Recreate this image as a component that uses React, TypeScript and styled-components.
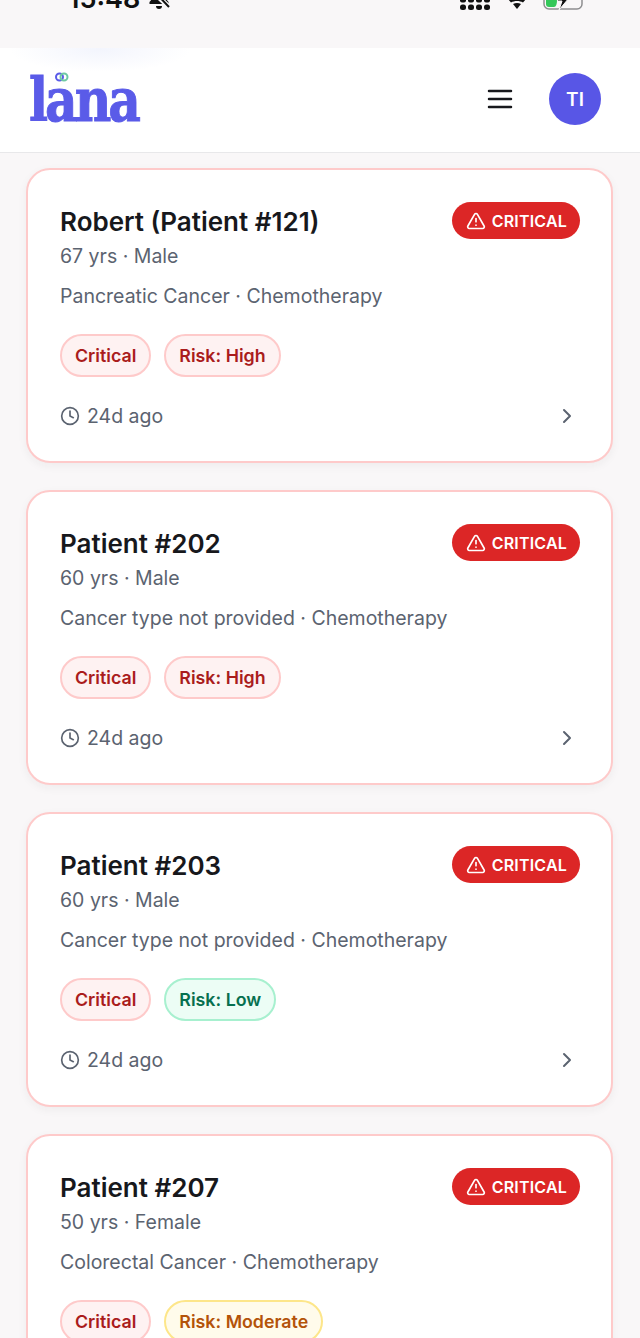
import styled, { createGlobalStyle } from "styled-components";
import { ChevronRight, Clock, TriangleAlert } from "lucide-react";

const GlobalStyle = createGlobalStyle`
  html, body {
    margin: 0;
    padding: 0;
    background: #f9f7f8;
    font-family: Inter, "Liberation Sans", sans-serif;
  }
`;

const Page = styled.div`
  width: 640px;
  height: 1338px;
  overflow: hidden;
  background: #f9f7f8;
`;

const StatusBar = styled.div`
  height: 48px;
  box-sizing: border-box;
  padding: 0 55px 38px 68px;
  display: flex;
  align-items: flex-end;
  justify-content: space-between;
  overflow: hidden;
`;

const StatusLeft = styled.div`
  display: flex;
  align-items: flex-end;
  gap: 8px;
`;

const Time = styled.span`
  font-size: 27px;
  line-height: 27px;
  font-weight: 600;
  margin-bottom: -2px;
  color: #111;
`;

const StatusRight = styled.div`
  display: flex;
  align-items: flex-end;
  gap: 16px;
`;

const Header = styled.header`
  height: 105px;
  box-sizing: border-box;
  padding: 0 39px 2px 29px;
  display: flex;
  align-items: center;
  justify-content: space-between;
  background: radial-gradient(90px 22px at 100px 2px, #f3f5fd, transparent), #fff;
  border-bottom: 1px solid #e8e8ea;
`;

const Logo = styled.div`
  position: relative;
  height: 60px;
  margin-top: 1px;
  display: flex;
  align-items: flex-end;
`;

const LogoText = styled.span`
  font-family: "DejaVu Serif", serif;
  font-weight: 700;
  font-size: 60px;
  line-height: 60px;
  letter-spacing: -3.6px;
  color: #5a5be8;
  -webkit-text-stroke: 1px #5a5be8;
  display: inline-block;
  transform: scaleX(0.84);
  transform-origin: left bottom;
  width: 111px;
`;

const LogoDots = styled.svg`
  position: absolute;
  left: 26px;
  top: 2px;
`;

const HeaderActions = styled.div`
  display: flex;
  align-items: center;
  gap: 36px;
`;

const Burger = styled.svg`
  display: block;
`;

const Avatar = styled.div`
  width: 52px;
  height: 52px;
  border-radius: 50%;
  background: #5856e6;
  color: #fff;
  font-size: 19px;
  font-weight: 600;
  display: flex;
  align-items: center;
  justify-content: center;
`;

const List = styled.main`
  padding: 15px 27px 0 26px;
  display: flex;
  flex-direction: column;
  gap: 27px;
`;

const Card = styled.article`
  box-sizing: border-box;
  height: 295px;
  flex-shrink: 0;
  padding: 32px 31px 0 32px;
  background: #fff;
  border: 2px solid #fecaca;
  border-radius: 24px;
  box-shadow: 0 3px 10px rgba(40, 30, 40, 0.05);
`;

const TopRow = styled.div`
  display: flex;
  justify-content: space-between;
  align-items: flex-start;
`;

const Name = styled.h2`
  margin: 2px 0 0;
  font-size: 26px;
  line-height: 36px;
  font-weight: 600;
  color: #17181c;
`;

const CriticalBadge = styled.div`
  height: 37px;
  box-sizing: border-box;
  padding: 0 13px 0 14px;
  display: flex;
  align-items: center;
  gap: 6px;
  border-radius: 19px;
  background: #dc2626;
  color: #fff;
  font-size: 16px;
  font-weight: 600;
  letter-spacing: 0.2px;
`;

const Demographics = styled.div`
  margin-top: 2px;
  font-size: 19.5px;
  line-height: 28px;
  color: #5b6370;
`;

const Diagnosis = styled.div`
  margin-top: 12px;
  font-size: 19.5px;
  line-height: 28px;
  color: #5b6370;
`;

const Pills = styled.div`
  margin-top: 24px;
  display: flex;
  gap: 13px;
`;

const tones = {
  red: { bg: "#fef2f2", border: "#fecaca", color: "#aa1c1c" },
  green: { bg: "#ecfdf5", border: "#a7f0cf", color: "#07704f" },
  amber: { bg: "#fffbeb", border: "#fde68a", color: "#b45309" },
};

const Pill = styled.span<{ $tone: keyof typeof tones }>`
  height: 43px;
  box-sizing: border-box;
  padding: 0 13px;
  display: inline-flex;
  align-items: center;
  border-radius: 22px;
  border: 2px solid ${(p) => tones[p.$tone].border};
  background: ${(p) => tones[p.$tone].bg};
  color: ${(p) => tones[p.$tone].color};
  font-size: 17.8px;
  font-weight: 600;
`;

const Footer = styled.div`
  margin-top: 25px;
  padding-right: 1px;
  display: flex;
  align-items: center;
  justify-content: space-between;
`;

const Ago = styled.div`
  display: flex;
  align-items: center;
  gap: 7px;
  font-size: 19.5px;
  line-height: 28px;
  color: #5b6370;
`;

const patients = [
  { name: "Robert (Patient #121)", info: "67 yrs · Male", dx: "Pancreatic Cancer · Chemotherapy", risk: "High", tone: "red" },
  { name: "Patient #202", info: "60 yrs · Male", dx: "Cancer type not provided · Chemotherapy", risk: "High", tone: "red" },
  { name: "Patient #203", info: "60 yrs · Male", dx: "Cancer type not provided · Chemotherapy", risk: "Low", tone: "green" },
  { name: "Patient #207", info: "50 yrs · Female", dx: "Colorectal Cancer · Chemotherapy", risk: "Moderate", tone: "amber" },
] as const;

function App() {
  return (
    <Page>
      <GlobalStyle />
      <StatusBar>
        <StatusLeft>
          <Time>15:48</Time>
          <svg width="22" height="24" viewBox="0 0 22 24" fill="#111">
            <path d="M11 1c-4 0-6.500 3-6.500 7 0 4-1 6-3 8v2h19v-2c-2-2-3-4-3-8 0-4-2.500-7-6.500-7z" />
            <path d="M8 20h6a3 3 0 0 1-6 0z" />
            <path d="M1 2l20 19" stroke="#f9f7f8" strokeWidth="5" />
            <path d="M2 1l19 20" stroke="#111" strokeWidth="2" />
          </svg>
        </StatusLeft>
        <StatusRight>
          <svg width="32" height="24" viewBox="0 0 32 24" fill="#111">
            {[1, 9, 17, 25].map((x) => (
              <g key={x}>
                <rect x={x} y="11.500" width="6" height="5" rx="2" />
                <rect x={x} y="18.500" width="6" height="5.500" rx="2.500" />
              </g>
            ))}
          </svg>
          <svg width="20" height="24" viewBox="0 0 20 24" fill="#111">
            <path d="M1 13c5-3 13-3 18 0l-3 3.500c-3.500-2-8.500-2-12 0z" />
            <path d="M6 18c2.500-1.300 5.500-1.300 8 0l-4 5z" />
          </svg>
          <svg width="42" height="24" viewBox="0 0 42 24">
            <rect x="1" y="5" width="38" height="18" rx="5" fill="none" stroke="#8e8e90" strokeWidth="1.500" />
            <path d="M3 7h8c2 0 3 3 3 7s-1 7-3 7H6c-2 0-3-1-3-3z" fill="#34c759" />
            <path d="M23 4l-9 11h5l-3 9 10-12h-5l3-8z" fill="#111" stroke="#f9f7f8" strokeWidth="1" />
          </svg>
        </StatusRight>
      </StatusBar>
      <Header>
        <Logo>
          <LogoText>lana</LogoText>
          <LogoDots width="14" height="10" viewBox="0 0 14 10">
            <circle cx="4.500" cy="5" r="3.500" fill="none" stroke="#5a5be8" strokeWidth="2" />
            <circle cx="9" cy="5" r="3.500" fill="none" stroke="#6fc9a4" strokeWidth="2" />
          </LogoDots>
        </Logo>
        <HeaderActions>
          <Burger width="26" height="22" viewBox="0 0 26 22" fill="none" stroke="#17181c" strokeWidth="2.500" strokeLinecap="round">
            <path d="M2 3h22M2 11h22M2 19h22" />
          </Burger>
          <Avatar>TI</Avatar>
        </HeaderActions>
      </Header>
      <List>
        {patients.map((p) => (
          <Card key={p.name}>
            <TopRow>
              <Name>{p.name}</Name>
              <CriticalBadge>
                <TriangleAlert size={20} strokeWidth={2} />
                CRITICAL
              </CriticalBadge>
            </TopRow>
            <Demographics>{p.info}</Demographics>
            <Diagnosis>{p.dx}</Diagnosis>
            <Pills>
              <Pill $tone="red">Critical</Pill>
              <Pill $tone={p.tone}>Risk: {p.risk}</Pill>
            </Pills>
            <Footer>
              <Ago>
                <Clock size={20} strokeWidth={2} />
                24d ago
              </Ago>
              <ChevronRight size={24} strokeWidth={2} color="#5b6370" />
            </Footer>
          </Card>
        ))}
      </List>
    </Page>
  );
}

export default App;
